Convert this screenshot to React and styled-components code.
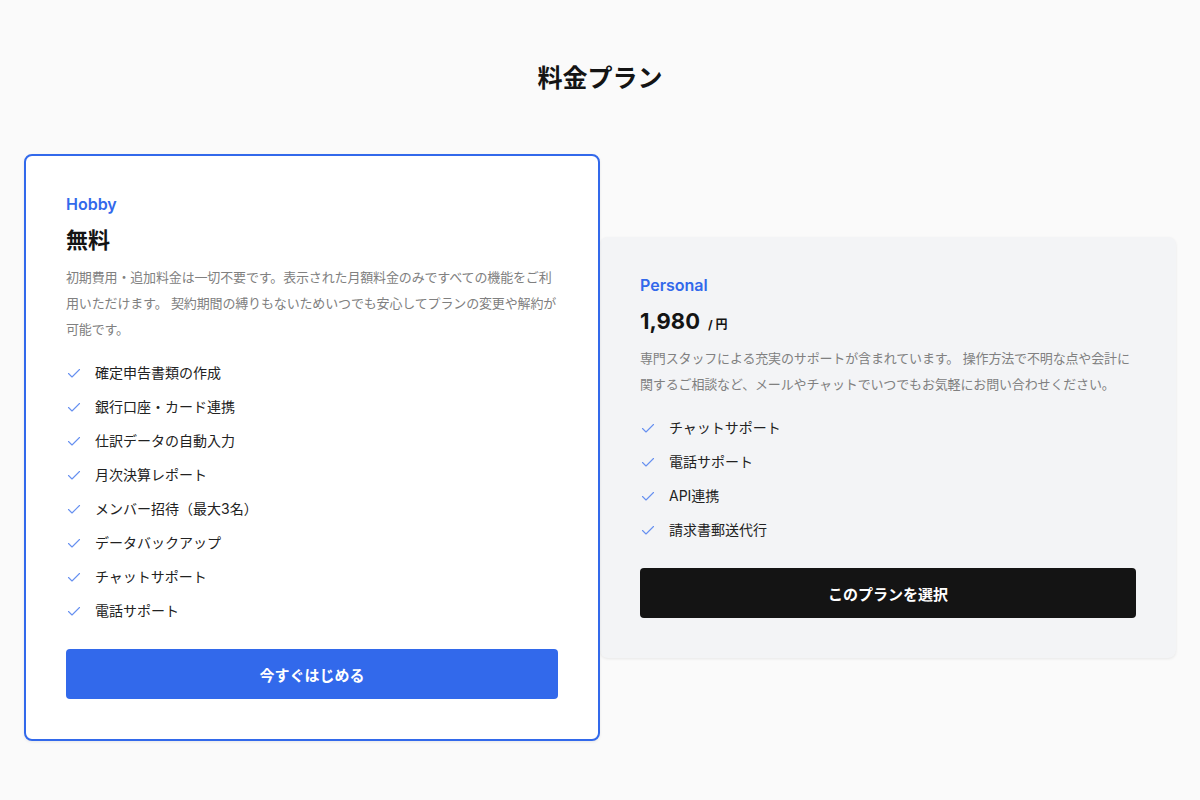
import React from "react";
import styled, { createGlobalStyle } from "styled-components";

const GlobalStyle = createGlobalStyle`
    body {
        margin: 0;
        background: #fafafa;
        font-family: Inter, "Noto Sans CJK JP", sans-serif;
        color: #141414;
    }
`;

const Page = styled.div`
    padding: 58px 24px;
`;

const Title = styled.h1`
    margin: 0 0 56px;
    text-align: center;
    font-size: 25px;
    line-height: 40px;
    font-weight: 700;
`;

const Row = styled.div`
    display: grid;
    grid-template-columns: 1fr 1fr;
    align-items: center;
`;

const Card = styled.div`
    padding: 40px;
    border-radius: 8px;
    background: ${props => (props.featured ? "#ffffff" : "#f3f4f6")};
    border: ${props => (props.featured ? "2px solid #3269eb" : "none")};
    box-shadow: 0 1px 3px rgba(0, 0, 0, 0.08);
    position: relative;
    z-index: ${props => (props.featured ? 1 : 0)};
`;

const Label = styled.div`
    font-size: 16px;
    line-height: 16px;
    font-weight: 600;
    color: #3269eb;
`;

const Price = styled.div`
    margin-top: 15px;
    font-size: 22px;
    line-height: 26px;
    font-weight: 700;
`;

const Unit = styled.span`
    margin-left: 8px;
    font-size: 12px;
    line-height: 1;
    font-weight: 700;
`;

const Desc = styled.p`
    margin: 11px 0 0;
    font-size: 13px;
    line-height: 26px;
    letter-spacing: -0.15px;
    color: #808080;
`;

const Features = styled.ul`
    list-style: none;
    margin: 21px 0 0;
    padding: 0;
    display: flex;
    flex-direction: column;
    gap: 14px;
`;

const Feature = styled.li`
    display: flex;
    align-items: center;
    gap: 14px;
    font-size: 14px;
    line-height: 20px;
    color: #222;
`;

const Check = styled.svg`
    width: 14px;
    height: 14px;
    margin-left: 1px;
    flex-shrink: 0;
`;

const Button = styled.button`
    margin-top: 28px;
    width: 100%;
    height: 50px;
    border: none;
    border-radius: 4px;
    background: ${props => (props.primary ? "#3269eb" : "#141414")};
    color: #fff;
    font-family: inherit;
    font-size: 15px;
    font-weight: 700;
    cursor: pointer;
`;

const CheckIcon = () => (
    <Check viewBox="0 0 14 14" fill="none">
        <path d="M1.5 7.5 L5 11 L12.5 3.5" stroke="#6690f0" strokeWidth="1.1" strokeLinecap="round" strokeLinejoin="round" />
    </Check>
);

const plans = [
    {
        label: "Hobby",
        price: "無料",
        desc: "初期費用・追加料金は一切不要です。表示された月額料金のみですべての機能をご利用いただけます。 契約期間の縛りもないためいつでも安心してプランの変更や解約が可能です。",
        features: ["確定申告書類の作成", "銀行口座・カード連携", "仕訳データの自動入力", "月次決算レポート", "メンバー招待（最大3名）", "データバックアップ", "チャットサポート", "電話サポート"],
        button: "今すぐはじめる",
        featured: true,
    },
    {
        label: "Personal",
        price: "1,980",
        unit: "/ 円",
        desc: "専門スタッフによる充実のサポートが含まれています。 操作方法で不明な点や会計に関するご相談など、メールやチャットでいつでもお気軽にお問い合わせください。",
        features: ["チャットサポート", "電話サポート", "API連携", "請求書郵送代行"],
        button: "このプランを選択",
    },
];

const App = () => (
    <Page>
        <GlobalStyle />
        <Title>料金プラン</Title>
        <Row>
            {plans.map(plan => (
                <Card key={plan.label} featured={plan.featured}>
                    <Label>{plan.label}</Label>
                    <Price>
                        {plan.price}
                        {plan.unit && <Unit>{plan.unit}</Unit>}
                    </Price>
                    <Desc>{plan.desc}</Desc>
                    <Features>
                        {plan.features.map(f => (
                            <Feature key={f}>
                                <CheckIcon />
                                {f}
                            </Feature>
                        ))}
                    </Features>
                    <Button primary={plan.featured}>{plan.button}</Button>
                </Card>
            ))}
        </Row>
    </Page>
);

export default App;
